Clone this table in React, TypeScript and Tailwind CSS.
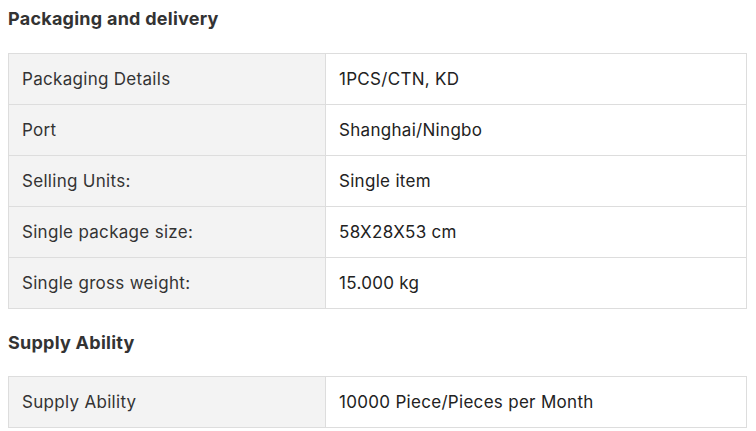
import React from "react";

const rows1: [string, string][] = [
  ["Packaging Details", "1PCS/CTN, KD"],
  ["Port", "Shanghai/Ningbo"],
  ["Selling Units:", "Single item"],
  ["Single package size:", "58X28X53 cm"],
  ["Single gross weight:", "15.000 kg"],
];

const rows2: [string, string][] = [["Supply Ability", "10000 Piece/Pieces per Month"]];

function Table({ rows }: { rows: [string, string][] }) {
  return (
    <table className="w-[739px] table-fixed border-collapse">
      <colgroup>
        <col className="w-[317px]" />
        <col />
      </colgroup>
      <tbody>
        {rows.map(([k, v]) => (
          <tr key={k}>
            <td className="h-[51px] border border-[#dddddd] bg-[#f3f3f3] px-[13px] text-[17px] leading-6 tracking-[0.3px] text-[#333333]">
              {k}
            </td>
            <td className="h-[51px] border border-[#dddddd] bg-white px-[13px] text-[17px] leading-6 tracking-[0.3px] text-[#222222]">
              {v}
            </td>
          </tr>
        ))}
      </tbody>
    </table>
  );
}

export default function App() {
  return (
    <div className="min-h-screen bg-white px-2 pt-[7px] font-['Inter',sans-serif]">
      <h2 className="text-[18px] font-bold leading-6 tracking-[0.25px] text-[#333333]">Packaging and delivery</h2>
      <div className="mt-[22px]">
        <Table rows={rows1} />
      </div>
      <h2 className="mt-[22px] text-[18px] font-bold leading-6 tracking-[0.25px] text-[#333333]">Supply Ability</h2>
      <div className="mt-[21px]">
        <Table rows={rows2} />
      </div>
    </div>
  );
}
